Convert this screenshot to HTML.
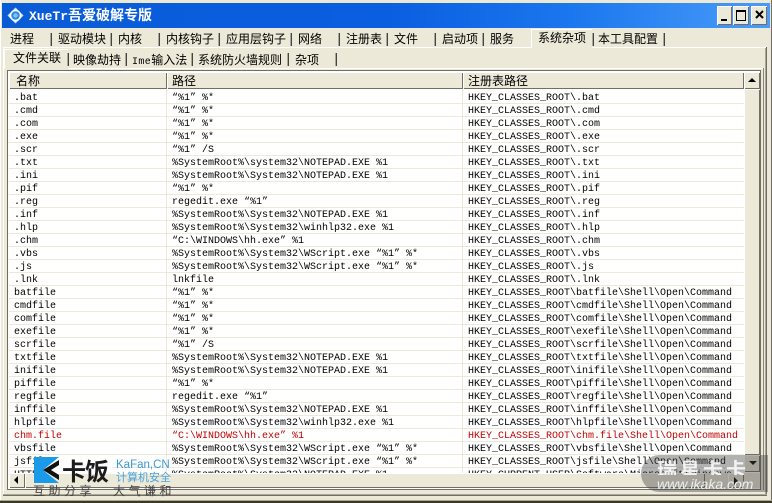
<!DOCTYPE html>
<html><head><meta charset="utf-8"><style>
html,body{margin:0;padding:0}
body{width:772px;height:503px;overflow:hidden;position:relative;background:#ece9d8;font-family:"Liberation Sans","WenQuanYi Zen Hei","Noto Sans CJK SC",sans-serif}
div,pre{position:absolute}
.t{font-size:12px;line-height:14px;white-space:nowrap;color:#000}
.s{width:1px;background:#aca899;border-right:1px solid #444;top:33px;height:13px}
.s2{width:1px;background:#aca899;border-right:1px solid #444;top:53px;height:13px}
pre{margin:0;font:10px/13px "Liberation Mono",monospace;color:#000}
pre span{color:#c00000}
.b{background:#ece9d8;box-shadow:inset 1px 1px 0 #fff,inset -1px -1px 0 #716f64}
</style></head><body>
<div style="left:2px;top:3px;width:768px;height:25px;background:linear-gradient(90deg,#0a5cd6 0,#0a5ee0 50%,#1c78ee 75%,#4a9cf8 100%)"></div>
<svg style="position:absolute;left:7px;top:7px" width="17" height="17" viewBox="0 0 17 17"><path d="M8.5 0.5L16.5 8.5L8.5 16.5L0.5 8.5Z" fill="#cfe4f8"/><circle cx="8.5" cy="8.5" r="5" fill="#2a8ae8" stroke="#fff" stroke-width="1.5"/><circle cx="8.5" cy="8.5" r="2.2" fill="#7cc4fa"/></svg>
<div style="left:29px;top:7px;color:#fff;font:bold 13px/16px 'Liberation Mono',monospace;white-space:nowrap">XueTr<span style="font:bold 14px/16px 'WenQuanYi Zen Hei','Noto Sans CJK SC',sans-serif">吾爱破解专版</span></div>

<div class="b" style="left:717px;top:6px;width:15px;height:19px"></div><div style="left:721px;top:19px;width:6px;height:2px;background:#000"></div>
<div class="b" style="left:733px;top:6px;width:16px;height:19px"></div><div style="left:736px;top:10px;width:8px;height:8px;border:1px solid #000;border-top-width:2px"></div>
<div class="b" style="left:751px;top:6px;width:16px;height:19px"></div>
<svg style="position:absolute;left:755px;top:10px" width="9" height="9"><path d="M1 1L8 8M8 1L1 8" stroke="#000" stroke-width="2"/></svg>

<div style="left:3px;top:47px;width:763px;height:1px;background:#fff"></div>
<div style="left:3px;top:47px;width:1px;height:448px;background:#fff"></div>
<div style="left:531px;top:29px;width:61px;height:19px;background:#ece9d8;box-shadow:inset 1px 1px 0 #fff"></div>
<div class="t" style="left:10px;top:32px">进程</div>
<div class="s" style="left:50px"></div><div class="t" style="left:58px;top:32px">驱动模块</div>
<div class="s" style="left:110px"></div><div class="t" style="left:118px;top:32px">内核</div>
<div class="s" style="left:158px"></div><div class="t" style="left:166px;top:32px">内核钩子</div>
<div class="s" style="left:218px"></div><div class="t" style="left:226px;top:32px">应用层钩子</div>
<div class="s" style="left:290px"></div><div class="t" style="left:298px;top:32px">网络</div>
<div class="s" style="left:338px"></div><div class="t" style="left:346px;top:32px">注册表</div>
<div class="s" style="left:386px"></div><div class="t" style="left:394px;top:32px">文件</div>
<div class="s" style="left:434px"></div><div class="t" style="left:442px;top:32px">启动项</div>
<div class="s" style="left:482px"></div><div class="t" style="left:490px;top:32px">服务</div>
<div class="t" style="left:538px;top:31px">系统杂项</div>
<div class="s" style="left:592px"></div><div class="t" style="left:598px;top:32px">本工具配置</div>
<div class="s" style="left:663px"></div>

<div style="left:765px;top:48px;width:1px;height:447px;background:#aca899"></div>
<div style="left:766px;top:47px;width:1px;height:449px;background:#716f64"></div>

<div style="left:5px;top:68px;width:758px;height:1px;background:#fff"></div>
<div style="left:763px;top:68px;width:1px;height:422px;background:#8a887a"></div>
<div style="left:4px;top:49px;width:64px;height:20px;background:#ece9d8;box-shadow:inset 1px 1px 0 #fff"></div>
<div class="t" style="left:13px;top:51px">文件关联</div>
<div class="s2" style="left:67px"></div><div class="t" style="left:73px;top:53px">映像劫持</div>
<div class="s2" style="left:125px"></div><div class="t" style="left:132px;top:53px"><span style="font:10px/14px 'Liberation Mono',monospace;letter-spacing:.4px">Ime</span>输入法</div>
<div class="s2" style="left:191px"></div><div class="t" style="left:198px;top:53px">系统防火墙规则</div>
<div class="s2" style="left:287px"></div><div class="t" style="left:295px;top:53px">杂项</div>
<div class="s2" style="left:335px"></div>

<div style="left:8px;top:71px;width:752px;height:418px;background:#fff;box-shadow:0 0 0 1px #716f64"></div>
<div style="left:9px;top:72px;width:735px;height:401px;overflow:hidden;background:#fff">
<div style="left:0;top:19px;width:735px;height:390px;background:repeating-linear-gradient(180deg,#fff 0,#fff 12px,#ece9d8 12px,#ece9d8 13px)"></div>
<div style="left:157px;top:18px;width:1px;height:390px;background:#ece9d8"></div>
<div style="left:453px;top:18px;width:1px;height:390px;background:#ece9d8"></div>
<pre style="left:5px;top:20px">.bat
.cmd
.com
.exe
.scr
.txt
.ini
.pif
.reg
.inf
.hlp
.chm
.vbs
.js
.lnk
batfile
cmdfile
comfile
exefile
scrfile
txtfile
inifile
piffile
regfile
inffile
hlpfile
<span>chm.file</span>
vbsfile
jsfile
HTTP</pre>
<pre style="left:163px;top:20px">“%1” %*
“%1” %*
“%1” %*
“%1” %*
“%1” /S
%SystemRoot%\system32\NOTEPAD.EXE %1
%SystemRoot%\System32\NOTEPAD.EXE %1
“%1” %*
regedit.exe “%1”
%SystemRoot%\System32\NOTEPAD.EXE %1
%SystemRoot%\System32\winhlp32.exe %1
“C:\WINDOWS\hh.exe” %1
%SystemRoot%\System32\WScript.exe “%1” %*
%SystemRoot%\System32\WScript.exe “%1” %*
lnkfile
“%1” %*
“%1” %*
“%1” %*
“%1” %*
“%1” /S
%SystemRoot%\System32\NOTEPAD.EXE %1
%SystemRoot%\System32\NOTEPAD.EXE %1
“%1” %*
regedit.exe “%1”
%SystemRoot%\System32\NOTEPAD.EXE %1
%SystemRoot%\System32\winhlp32.exe %1
<span>“C:\WINDOWS\hh.exe” %1</span>
%SystemRoot%\System32\WScript.exe “%1” %*
%SystemRoot%\System32\WScript.exe “%1” %*
%SystemRoot%\System32\NOTEPAD.EXE %1</pre>
<pre style="left:459px;top:20px">HKEY_CLASSES_ROOT\.bat
HKEY_CLASSES_ROOT\.cmd
HKEY_CLASSES_ROOT\.com
HKEY_CLASSES_ROOT\.exe
HKEY_CLASSES_ROOT\.scr
HKEY_CLASSES_ROOT\.txt
HKEY_CLASSES_ROOT\.ini
HKEY_CLASSES_ROOT\.pif
HKEY_CLASSES_ROOT\.reg
HKEY_CLASSES_ROOT\.inf
HKEY_CLASSES_ROOT\.hlp
HKEY_CLASSES_ROOT\.chm
HKEY_CLASSES_ROOT\.vbs
HKEY_CLASSES_ROOT\.js
HKEY_CLASSES_ROOT\.lnk
HKEY_CLASSES_ROOT\batfile\Shell\Open\Command
HKEY_CLASSES_ROOT\cmdfile\Shell\Open\Command
HKEY_CLASSES_ROOT\comfile\Shell\Open\Command
HKEY_CLASSES_ROOT\exefile\Shell\Open\Command
HKEY_CLASSES_ROOT\scrfile\Shell\Open\Command
HKEY_CLASSES_ROOT\txtfile\Shell\Open\Command
HKEY_CLASSES_ROOT\inifile\Shell\Open\Command
HKEY_CLASSES_ROOT\piffile\Shell\Open\Command
HKEY_CLASSES_ROOT\regfile\Shell\Open\Command
HKEY_CLASSES_ROOT\inffile\Shell\Open\Command
HKEY_CLASSES_ROOT\hlpfile\Shell\Open\Command
<span>HKEY_CLASSES_ROOT\chm.file\Shell\Open\Command</span>
HKEY_CLASSES_ROOT\vbsfile\Shell\Open\Command
HKEY_CLASSES_ROOT\jsfile\Shell\Open\Command
HKEY_CURRENT_USER\Software\Microsoft\Windows</pre>
<div class="b" style="left:0;top:0;width:158px;height:17px"></div>
<div class="b" style="left:158px;top:0;width:296px;height:17px"></div>
<div class="b" style="left:454px;top:0;width:281px;height:17px"></div>
<div class="t" style="left:7px;top:2px">名称</div>
<div class="t" style="left:163px;top:2px">路径</div>
<div class="t" style="left:459px;top:2px">注册表路径</div>
</div>

<!-- vertical scrollbar -->
<div class="b" style="left:744px;top:72px;width:16px;height:17px"></div>
<svg style="position:absolute;left:748px;top:78px" width="9" height="5"><path d="M4 0L8 4H0Z" fill="#000"/></svg>
<div class="b" style="left:744px;top:89px;width:16px;height:366px"></div>
<div class="b" style="left:744px;top:455px;width:16px;height:17px"></div>
<svg style="position:absolute;left:749px;top:461px" width="9" height="5"><path d="M0 0H8L4 4Z" fill="#000"/></svg>
<!-- horizontal scrollbar -->
<div style="left:9px;top:473px;width:751px;height:15px;background:#ece9d8"></div>
<div class="b" style="left:9px;top:473px;width:16px;height:15px"></div>
<svg style="position:absolute;left:14px;top:476px" width="5" height="9"><path d="M4 0V8L0 4Z" fill="#000"/></svg>
<div class="b" style="left:25px;top:473px;width:680px;height:15px"></div>
<div class="b" style="left:728px;top:473px;width:16px;height:15px"></div>
<svg style="position:absolute;left:734px;top:477px" width="5" height="9"><path d="M0 0V8L4 4Z" fill="#000"/></svg>

<div style="left:3px;top:494px;width:764px;height:1px;background:#aca899"></div>
<div style="left:3px;top:495px;width:764px;height:1px;background:#716f64"></div>
<div style="left:0;top:500px;width:772px;height:1px;background:#aca899"></div>
<div style="left:0;top:501px;width:772px;height:2px;background:#3a3a24"></div>
<div style="left:0;top:0;width:1px;height:500px;background:#fff"></div>
<div style="left:771px;top:0;width:1px;height:500px;background:#716f64"></div>

<!-- watermark left -->
<div style="left:34px;top:457px;width:78px;height:16px;background:#fff"></div>
<svg style="position:absolute;left:34px;top:457px" width="26" height="26" viewBox="0 0 26 26"><path d="M0 0H25L9 13L25 26H0Z" fill="#1a9ae8"/><path d="M25 3L9 13L25 23V18L17 13L25 8Z" fill="#111"/></svg>
<div style="left:62px;top:456px;font:bold 24px/28px 'WenQuanYi Zen Hei','Noto Sans CJK SC',sans-serif;color:#1c1c1c;letter-spacing:-1px;white-space:nowrap">卡饭</div>
<div style="left:116px;top:458px;font:11.5px/14px 'Liberation Sans',sans-serif;color:#3a98d4;white-space:nowrap">KaFan,CN</div>
<div style="left:116px;top:471px;font:11px/13px 'WenQuanYi Zen Hei','Noto Sans CJK SC',sans-serif;color:#4aa4dc;white-space:nowrap">计算机安全</div>
<div style="left:33px;top:485px;font:12px/12px 'WenQuanYi Zen Hei','Noto Sans CJK SC',sans-serif;color:#444;letter-spacing:3.5px;white-space:nowrap">互助分享</div>
<div style="left:113px;top:485px;font:12px/12px 'WenQuanYi Zen Hei','Noto Sans CJK SC',sans-serif;color:#444;letter-spacing:3.5px;white-space:nowrap">大气谦和</div>

<!-- watermark right -->
<div style="left:641px;top:455px;width:127px;height:37px;border-radius:19px 0 0 19px;background:rgba(70,70,70,.42)"></div>
<div style="left:657px;top:459px;font:bold 20px/20px 'WenQuanYi Zen Hei','Noto Sans CJK SC',sans-serif;color:#fff;letter-spacing:3px;white-space:nowrap;opacity:.85;height:16px;overflow:hidden">瑞星卡卡</div>
<div style="left:657px;top:475px;font:italic 14px/18px 'Liberation Sans',sans-serif;color:#eee;white-space:nowrap">www.ikaka.com</div>
</body></html>
